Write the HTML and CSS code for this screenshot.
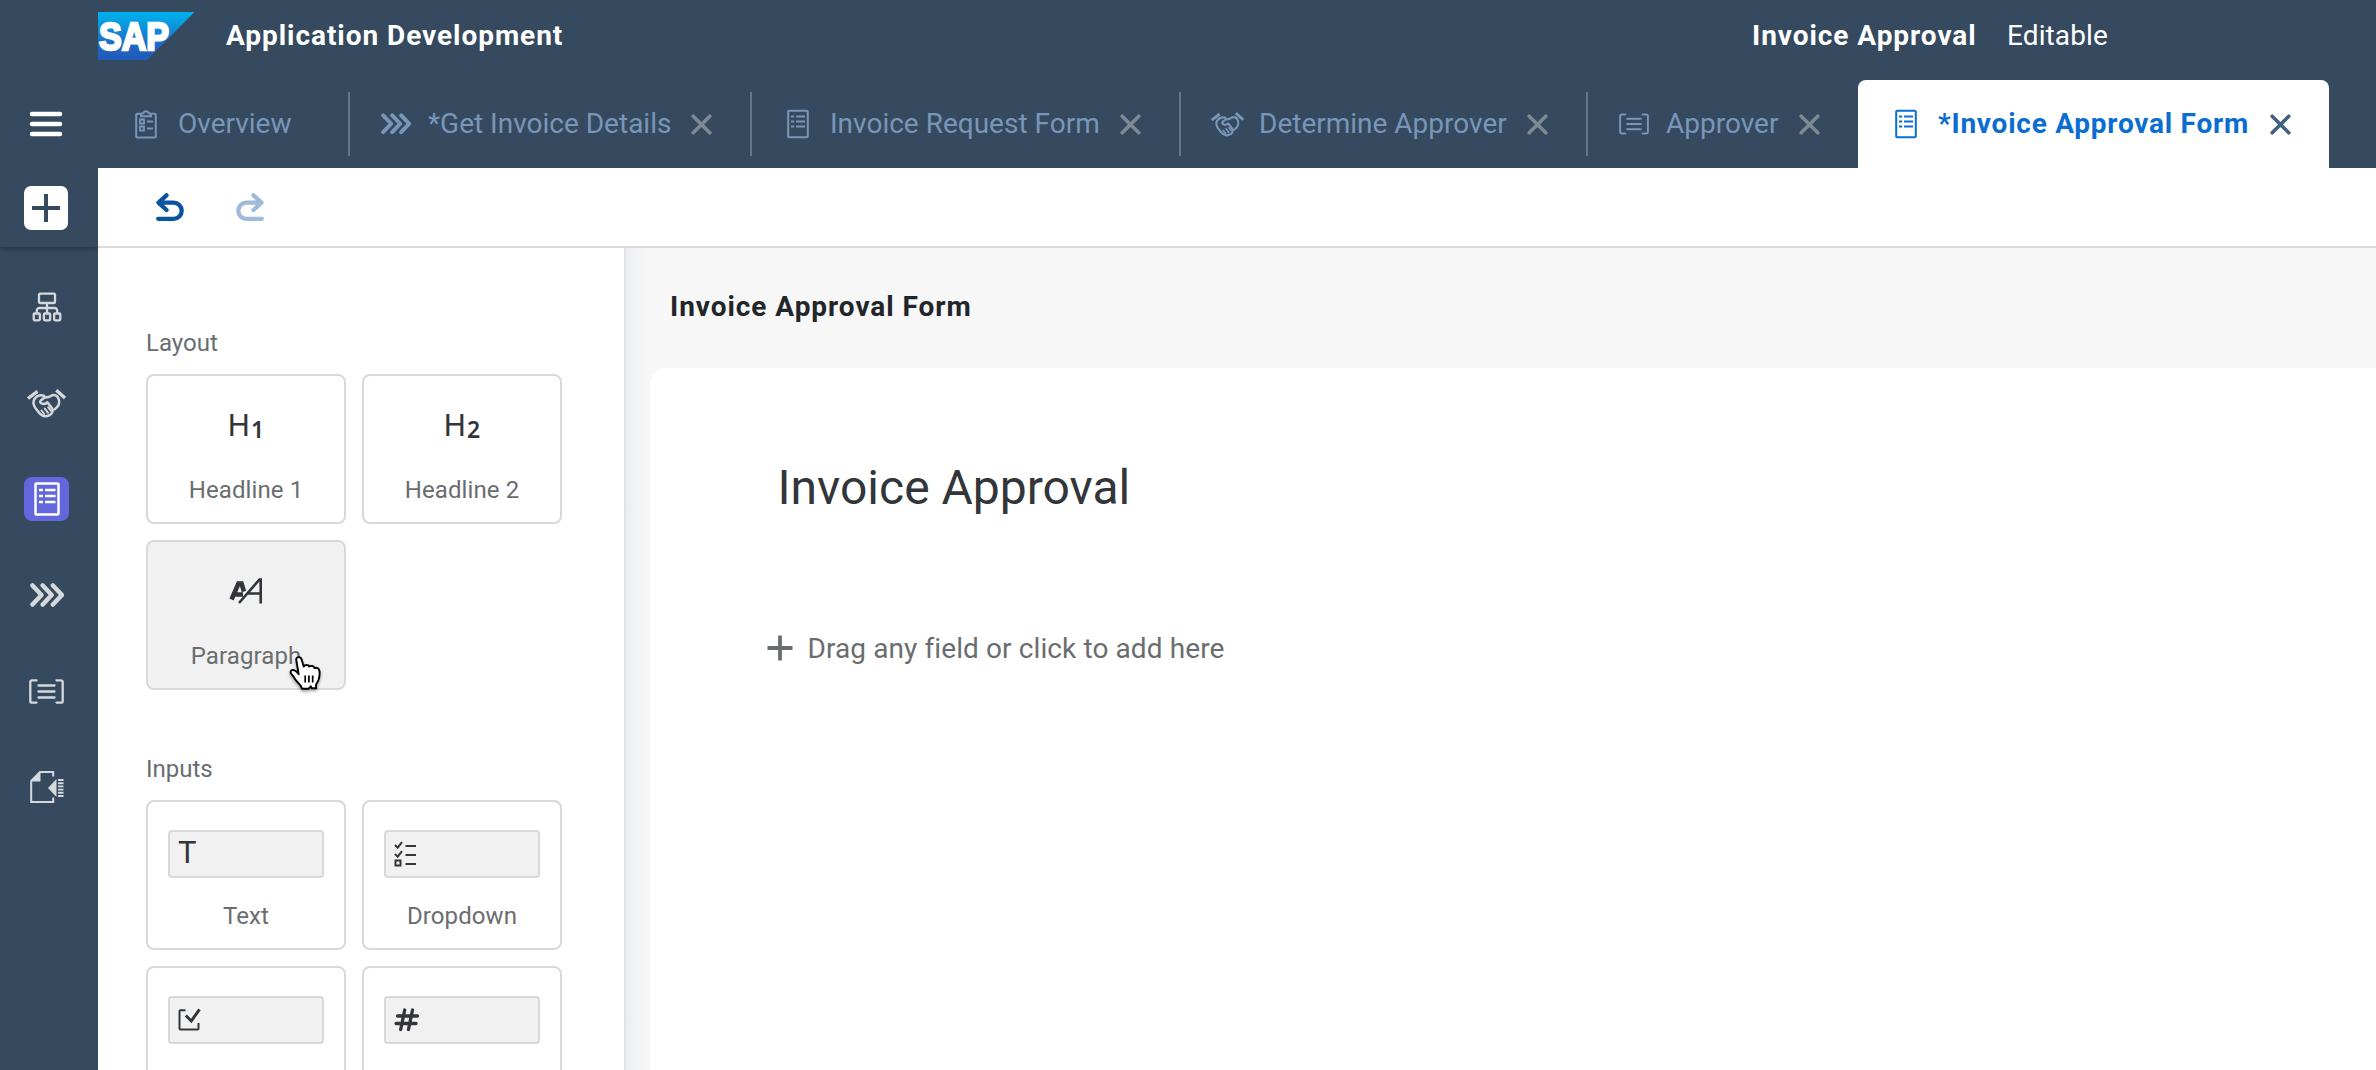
FILE: index.html
```html
<!DOCTYPE html>
<html lang="en">
<head>
<meta charset="utf-8">
<title>Application Development</title>
<link rel="stylesheet" href="styles.css">
</head>
<body>
<svg class="sprite" aria-hidden="true">
  <symbol id="i-form" viewBox="0 0 22 30">
    <g fill="none" stroke="currentColor">
      <rect x="1.2" y="1.7" width="19.6" height="26.6" rx="1" stroke-width="2"/>
      <path d="M4 7.6h3.2M4 12.6h3.2M4 17.6h3.2M9 7.6h9M9 12.6h9M9 17.6h9" stroke-width="2"/>
    </g>
  </symbol>
  <symbol id="i-clip" viewBox="0 0 22 30">
    <g fill="none" stroke="currentColor">
      <path d="M5.500 4.700H2.200a1 1 0 0 0-1 1V27.500a1 1 0 0 0 1 1H19.800a1 1 0 0 0 1-1V5.700a1 1 0 0 0-1-1H16.500" stroke-width="2"/>
      <path d="M6 7.300V5L8.500 4a2.700 2.700 0 0 1 5 0L16 5V7.300z" stroke-width="2"/>
      <path d="M5 10.500h4v4h-4zM5 17.500h4v4h-4zM12 12.500h6M12 19.500h6" stroke-width="1.800"/>
    </g>
  </symbol>
  <symbol id="i-chev" viewBox="0 0 34 24">
    <path d="M2.500 2.500 11.500 12 2.500 21.500M12.700 2.500 21.700 12 12.700 21.500M22.900 2.500 31.900 12 22.900 21.500" fill="none" stroke="currentColor" stroke-width="4.500" stroke-linecap="round" stroke-linejoin="round"/>
  </symbol>
  <symbol id="i-hands" viewBox="0 0 41 30">
    <g fill="none" stroke="currentColor" stroke-width="2.500" stroke-linecap="round" stroke-linejoin="round">
      <path d="M2 10.500 11.500 3.300M30.300 2.300 39 10" stroke-width="3.400" stroke-linecap="butt"/>
      <path d="M18 7.700C14 6.500 11 7.500 8.500 11C6.500 14 7 16 9 19.500L12.700 24.300C14.500 26.700 16.500 28 18.500 28.200C22 28.600 26 26.500 26.600 23.600C26.800 22 26.500 21 25.500 19.500L21.300 14.300C19.500 16.300 16.500 16.500 14.700 14.800C14 14 14.300 13 15 12.300L18 10C19.500 9 21 9.400 22.600 9C24.500 8.500 25.500 7.200 27.300 7C30 6.900 32.300 9 33 12.300C33.700 16 32 19 28.700 21.200"/>
      <path d="M15.500 22.500 18.200 26M18.800 20.500 22 24.800M22.200 19.200 24.800 22.600" stroke-width="2"/>
    </g>
  </symbol>
  <symbol id="i-list" viewBox="0 0 35 25">
    <path d="M7.500 1.400H3a1.700 1.700 0 0 0-1.700 1.700V21.900a1.700 1.700 0 0 0 1.700 1.700H7.500M27.500 1.400H32a1.700 1.700 0 0 1 1.700 1.700V21.900a1.700 1.700 0 0 1-1.700 1.700H27.500M9.500 6.500h16M9.500 12.500h16M9.500 18.500h16" fill="none" stroke="currentColor" stroke-width="2.300" stroke-linecap="round"/>
  </symbol>
  <symbol id="i-close" viewBox="0 0 21 21">
    <path d="M2.200 2.200 18.800 18.800M18.800 2.200 2.200 18.800" fill="none" stroke="currentColor" stroke-width="3.600" stroke-linecap="round"/>
  </symbol>
  <symbol id="i-undo" viewBox="0 0 28 28">
    <path d="M10.500 2.300 2.500 9.600 10.500 17M3 9.600H17.600a8.100 8.100 0 0 1 0 16.200H2.200" fill="none" stroke="currentColor" stroke-width="4.300" stroke-linecap="round" stroke-linejoin="round"/>
  </symbol>
</svg>

<div class="app">
  <nav class="rail">
    <div class="rail-top">
      <svg class="menu" width="34" height="26" viewBox="0 0 34 26"><path d="M3 3H31M3 13H31M3 23H31" stroke="#fff" stroke-width="4.500" stroke-linecap="round"/></svg>
      <span class="add"><svg width="28" height="28" viewBox="0 0 28 28"><path d="M14 0V28M0 14H28" stroke="#354a5f" stroke-width="4"/></svg></span>
    </div>
    <div class="rail-items">
      <span class="rail-item"><svg width="30" height="30" viewBox="0 0 30 30"><g fill="none" stroke="currentColor" stroke-width="2.300"><rect x="7" y="1.700" width="16" height="9.300" rx="1"/><path d="M15 11V21M4.800 21V18.500a2.500 2.500 0 0 1 2.500-2.500H22.700a2.500 2.500 0 0 1 2.500 2.500V21"/><rect x="1.700" y="21.500" width="6.200" height="6.800" rx="1"/><rect x="11.900" y="21.500" width="6.200" height="6.800" rx="1"/><rect x="22.100" y="21.500" width="6.200" height="6.800" rx="1"/></g></svg></span>
      <span class="rail-item"><svg width="41" height="30"><use href="#i-hands"/></svg></span>
      <span class="rail-item"><span class="rail-active"><svg width="26" height="34" viewBox="0 0 26 34"><g fill="none" stroke="#fff" stroke-width="2.500"><rect x="1.500" y="1.500" width="23" height="31" rx="1"/><path d="M5 8h4M5 14h4M5 20h4M11 8h10.500M11 14h10.500M11 20h10.500" stroke-width="2.400"/></g></svg></span></span>
      <span class="rail-item"><svg width="34" height="24"><use href="#i-chev"/></svg></span>
      <span class="rail-item"><svg width="35" height="25"><use href="#i-list"/></svg></span>
      <span class="rail-item"><svg width="34" height="32" viewBox="0 0 34 32"><path d="M23.200 5.500V1.100H10L1.200 10V30.900H23.200V26.500" fill="none" stroke="currentColor" stroke-width="2"/><path d="M10.500 0.500V10.500H0.500zM26.500 8V26L18 17z" fill="currentColor"/><path d="M28 9h5.500M28 12.200h5.500M28 15.400h5.500M28 18.600h5.500M28 21.800h5.500M28 25h5.500" stroke="currentColor" stroke-width="1.900"/></svg></span>
    </div>
  </nav>

  <div class="main">
    <header class="header">
      <svg class="logo" width="97" height="48" viewBox="0 0 97 48">
        <defs><linearGradient id="sap" x1="0" y1="0" x2="0" y2="1"><stop offset="0" stop-color="#00b1f0"/><stop offset=".22" stop-color="#089ddf"/><stop offset=".55" stop-color="#1a78cc"/><stop offset=".8" stop-color="#1f63be"/><stop offset="1" stop-color="#1f5cb9"/></linearGradient></defs>
        <path d="M0 0H96.500L49 48H0z" fill="url(#sap)"/>
        <text class="logo-text" x="1" y="37.500" textLength="70" lengthAdjust="spacingAndGlyphs">SAP</text>
      </svg>
      <span class="product">Application Development</span>
      <span class="project">Invoice Approval</span>
      <span class="state">Editable</span>
    </header>

    <div class="tabs">
      <div class="tab"><span class="tab-icon"><svg width="22" height="30"><use href="#i-clip"/></svg></span><span class="tab-text">Overview</span></div>
      <div class="tab"><span class="tab-icon"><svg width="30" height="21.500"><use href="#i-chev"/></svg></span><span class="tab-text">*Get Invoice Details</span><svg class="close" width="21" height="21"><use href="#i-close"/></svg></div>
      <div class="tab"><span class="tab-icon"><svg width="22" height="30"><use href="#i-form"/></svg></span><span class="tab-text">Invoice Request Form</span><svg class="close" width="21" height="21"><use href="#i-close"/></svg></div>
      <div class="tab"><span class="tab-icon"><svg width="35" height="26"><use href="#i-hands"/></svg></span><span class="tab-text">Determine Approver</span><svg class="close" width="21" height="21"><use href="#i-close"/></svg></div>
      <div class="tab"><span class="tab-icon"><svg width="30" height="22"><use href="#i-list"/></svg></span><span class="tab-text">Approver</span><svg class="close" width="21" height="21"><use href="#i-close"/></svg></div>
      <div class="tab tab-active"><span class="tab-icon"><svg width="22" height="30"><use href="#i-form"/></svg></span><span class="tab-text">*Invoice Approval Form</span><svg class="close" width="21" height="21"><use href="#i-close"/></svg></div>
    </div>

    <div class="toolbar">
      <svg class="undo" width="28" height="28"><use href="#i-undo"/></svg>
      <svg class="redo" width="28" height="28"><use href="#i-undo"/></svg>
    </div>

    <div class="workspace">
      <aside class="palette">
        <h3 class="group-title">Layout</h3>
        <div class="cards">
          <div class="card"><div class="glyph">H<span class="level">1</span></div><span class="label">Headline 1</span></div>
          <div class="card"><div class="glyph">H<span class="level">2</span></div><span class="label">Headline 2</span></div>
          <div class="card card-hover">
            <div class="glyph"><svg width="34" height="26" viewBox="0 0 34 26"><g fill="none" stroke="#32363a"><path d="M2.500 21.500 9.500 5.500H12.500L15 13.500M6 16.500H14" stroke-width="4.600"/><path d="M10 25 30.500 1.500H31.700V25.500M18.500 15.500H31.500" stroke-width="2.600"/></g></svg></div>
            <span class="label">Paragraph</span>
            <svg class="cursor" width="36" height="40" viewBox="0 0 36 40"><path d="M8.200 4.700C8 1.500 12.700 1 13.700 4.700L15.700 11.500C17 9.500 20.500 9.500 21.300 11.600C23 10.300 25.800 10.700 26.600 13.200C28.500 12.200 31 13 31.500 16C31.900 19 31.500 22 30.500 25C29.500 27.500 28.200 28.500 28 30L28.200 33.200H23.700L22.800 31.300L20.700 33.700H14L13 31.300C11.500 29 8.500 26.500 7 24C5.800 21.800 4.500 20.500 3 18.500C1.800 16 3.700 14.300 6 15.200C8 16 9.500 17.700 10.700 19.300Z" fill="#fff" stroke="#000" stroke-width="1.900" stroke-linejoin="round"/><path d="M17.200 20.500V27.500M20.900 20.500V27.500M24.700 20.500V27.500" stroke="#000" stroke-width="1.700"/></svg>
          </div>
        </div>
        <h3 class="group-title">Inputs</h3>
        <div class="cards">
          <div class="card"><div class="field"><span class="letter">T</span></div><span class="label">Text</span></div>
          <div class="card"><div class="field"><svg width="24" height="26" viewBox="0 0 24 26"><g fill="none" stroke="#32363a" stroke-width="2"><path d="M1 4 3.700 6.700 8 1.200M1 13 3.700 15.700 8 10.200M1.500 19.500h5v5h-5zM11.500 5h10.500M11.500 14h10.500M11.500 23h10.500"/></g></svg></div><span class="label">Dropdown</span></div>
          <div class="card"><div class="field"><svg width="24" height="26" viewBox="0 0 24 26"><path d="M7.500 3.200H2.500a1 1 0 0 0-1 1V21.500a1 1 0 0 0 1 1H19.500a1 1 0 0 0 1-1V16" fill="none" stroke="#32363a" stroke-width="2"/><path d="M7.800 8.500 13.300 14 21.500 2.300" fill="none" stroke="#32363a" stroke-width="3"/></svg></div></div>
          <div class="card"><div class="field"><svg width="26" height="26" viewBox="0 0 26 26"><path d="M10.700 3 6.700 22.500M18.500 3 14.500 22.500M3.500 9H23.500M2 16.500H22" fill="none" stroke="#32363a" stroke-width="3.300" stroke-linecap="round"/></svg></div></div>
        </div>
      </aside>

      <section class="canvas">
        <h2 class="canvas-title">Invoice Approval Form</h2>
        <div class="sheet">
          <h1 class="form-title">Invoice Approval</h1>
          <div class="dropzone"><svg width="26" height="26" viewBox="0 0 26 26"><path d="M13 0.500V25.500M0.500 13H25.500" stroke="#6a6d70" stroke-width="3.800"/></svg><span>Drag any field or click to add here</span></div>
        </div>
      </section>
    </div>
  </div>
</div>
</body>
</html>
```
FILE: styles.css
```css
* { box-sizing: border-box; }
body {
  margin: 0;
  font-family: Roboto, "Liberation Sans", sans-serif;
  font-size: 28px;
  color: #32363a;
}
h1, h2, h3 { margin: 0; }
svg { display: block; flex: none; }
.sprite { position: absolute; width: 0; height: 0; }

.app {
  display: grid;
  grid-template-columns: 98px 1fr;
  height: 100vh;
  overflow: hidden;
  background: #354a5f;
}

/* Left rail */
.rail-top {
  height: 247px;
  padding-top: 111px;
  padding-right: 6px;
  display: flex;
  flex-direction: column;
  align-items: center;
  gap: 49px;
  box-shadow: 0 2px 5px rgba(0, 0, 0, .3);
  clip-path: inset(0 0 -10px 0);
}
.add {
  display: grid;
  place-items: center;
  width: 44px;
  height: 44px;
  border-radius: 7px;
  background: #fff;
}
.rail-items {
  display: flex;
  flex-direction: column;
  padding: 12px 5px 0 0;
  color: #d5d9dc;
}
.rail-item {
  height: 96px;
  display: flex;
  align-items: center;
  justify-content: center;
}
.rail-active {
  display: grid;
  place-items: center;
  width: 45px;
  height: 44px;
  border-radius: 8px;
  background: #6367de;
}

/* Main column */
.main {
  display: flex;
  flex-direction: column;
  min-width: 0;
  min-height: 0;
}
.header {
  height: 80px;
  display: flex;
  align-items: center;
  padding-bottom: 9px;
  color: #fff;
}
.logo-text {
  font: 700 38px "Liberation Sans", sans-serif;
  fill: #fff;
  stroke: #fff;
  stroke-width: 2.4px;
}
.product, .project { font-weight: 700; letter-spacing: .95px; }
.product { width: 1526px; margin-left: 31px; }
.project { width: 255px; }
.state { letter-spacing: .1px; }

.tabs {
  height: 88px;
  display: grid;
  grid-template-columns: 252px 402px 429px 407px 270px 471px;
  color: #7896b8;
}
.tab {
  display: flex;
  align-items: center;
  gap: 16px;
  padding: 0 38px 0 30px;
  white-space: nowrap;
  background: linear-gradient(#64778b, #64778b) no-repeat right 12px / 2px 64px;
}
.tab:first-child { padding-left: 32px; }
.tab:nth-child(5) { background: none; }
.tab-icon {
  width: 32px;
  display: flex;
  justify-content: center;
}
.tab-text { padding-bottom: 2px; }
.close { margin-left: auto; color: #7d8994; }
.tab-active {
  padding-left: 32px;
  border-radius: 8px 8px 0 0;
  background: #fff;
  color: #0a6ed1;
  font-weight: 700;
  letter-spacing: .75px;
}
.tab-active .close { color: #42607f; }
.tab:not(.tab-active) .close { margin-right: 2px; }
.tab:nth-child(5) .close { margin-right: 0; }

.toolbar {
  height: 80px;
  display: flex;
  align-items: center;
  gap: 52px;
  padding-left: 58px;
  background: #fff;
  border-bottom: 2px solid #d9d9d9;
}
.undo { color: #0854a0; }
.redo { color: #a0bad9; transform: scaleX(-1); }

.workspace {
  flex: 1;
  min-height: 0;
  display: flex;
  overflow: hidden;
}
.palette {
  width: 526px;
  flex: none;
  padding: 80px 60px 0 48px;
  background: #fff;
  overflow: hidden;
}
.group-title {
  font-size: 24px;
  font-weight: 400;
  line-height: 30px;
  margin-bottom: 16px;
  color: #6a6d70;
}
.cards {
  display: grid;
  grid-template-columns: 200px 200px;
  grid-auto-rows: 150px;
  gap: 16px;
  margin-bottom: 64px;
}
.card {
  position: relative;
  display: flex;
  flex-direction: column;
  align-items: center;
  justify-content: space-between;
  padding: 28px 18px 17px;
  border: 2px solid #d9d9d9;
  border-radius: 8px;
}
.card-hover { background: #f1f1f1; }
.glyph {
  display: flex;
  align-items: center;
  height: 42px;
  font-size: 31px;
}
.level {
  margin: 7px 0 0 1px;
  font: 600 23px "Noto Sans", sans-serif;
}
.label {
  font-size: 24px;
  line-height: 30px;
  color: #6a6d70;
  letter-spacing: .1px;
}
.field {
  width: 156px;
  height: 48px;
  display: flex;
  align-items: center;
  padding: 0 0 1px 8px;
  border: 2px solid #d9d9d9;
  border-radius: 4px;
  background: #f1f1f1;
}
.letter { font-size: 31px; line-height: 40px; padding-bottom: 1px; }
.cursor {
  position: absolute;
  left: 140px;
  top: 113px;
  filter: drop-shadow(0 2px 1.5px rgba(0, 0, 0, .35));
}

.canvas {
  flex: 1;
  display: flex;
  flex-direction: column;
  padding-left: 26px;
  background: linear-gradient(90deg, #dfe1e3 0 1px, #ebecee 2px, #f2f3f4 12px, #f7f7f7 26px);
}
.canvas-title {
  height: 120px;
  padding: 0 0 2px 20px;
  line-height: 118px;
  font-size: 28px;
  font-weight: 700;
  letter-spacing: .95px;
  color: #22262a;
}
.sheet {
  flex: 1;
  padding: 90px 0 0 117px;
  border-top-left-radius: 16px;
  background: #fff;
}
.form-title {
  padding-left: 10.5px;
  font-size: 48px;
  font-weight: 400;
  line-height: 60px;
}
.dropzone {
  display: flex;
  align-items: center;
  gap: 14.5px;
  height: 40px;
  margin-top: 110px;
  color: #6a6d70;
  letter-spacing: .1px;
}
```
